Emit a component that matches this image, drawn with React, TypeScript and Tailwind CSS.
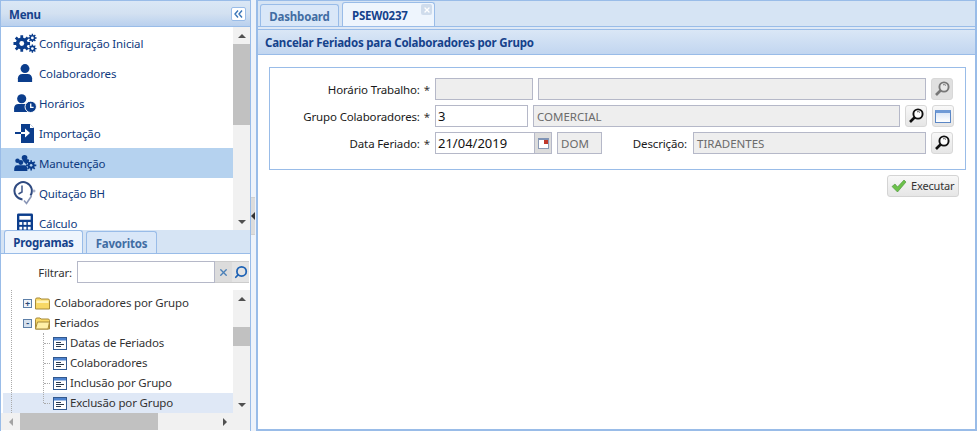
import { Search, X } from 'lucide-react'
import type { ReactNode } from 'react'

const NAVY = '#0b3d8c'

function GearsIcon() {
  return (
    <svg width="24" height="21" viewBox="0 0 26 22" fill="none">
      <g fill={NAVY}>
        <circle cx="9.500" cy="11" r="6.500" />
        <circle cx="21" cy="5" r="3.200" />
        <circle cx="21" cy="16.500" r="3.200" />
      </g>
      <g stroke={NAVY} strokeWidth="3">
        <path d="M9.500 2v18M.5 11h18M3 4.500l13 13M16 4.500l-13 13" />
      </g>
      <g stroke={NAVY} strokeWidth="1.500">
        <path d="M21 .5v9M16.500 5h9M17.800 1.800l6.400 6.400M24.200 1.800l-6.400 6.400M21 12v9M16.500 16.500h9M17.800 13.300l6.400 6.400M24.200 13.300l-6.400 6.400" />
      </g>
      <circle cx="9.500" cy="11" r="2.600" fill="#fff" />
      <circle cx="21" cy="5" r="1.500" fill="#fff" />
      <circle cx="21" cy="16.500" r="1.500" fill="#fff" />
    </svg>
  )
}

function UserIcon() {
  return (
    <svg width="16" height="18" viewBox="0 0 18 20" fill={NAVY}>
      <circle cx="9" cy="5" r="5" />
      <path d="M1 20v-4c0-3 2-5 5-5h6c3 0 5 2 5 5v4z" />
    </svg>
  )
}

function UserClockIcon() {
  return (
    <svg width="23" height="19" viewBox="0 0 24 20">
      <circle cx="8" cy="5" r="4.800" fill={NAVY} />
      <path d="M0 19v-4c0-3 2-4.500 4.500-4.500h7c2 0 3 .5 4 2V19z" fill={NAVY} />
      <circle cx="17.500" cy="13.500" r="6" fill={NAVY} stroke="#fff" strokeWidth="1" />
      <path d="M17.500 10v4h3" stroke="#fff" strokeWidth="1.400" fill="none" />
    </svg>
  )
}

function ImportIcon() {
  return (
    <svg width="20" height="19" viewBox="0 0 20 19">
      <path d="M6 0h9l4 4v15H6z" fill={NAVY} />
      <path d="M15 0l4 4h-4z" fill="#fff" />
      <path d="M0 9h10" stroke={NAVY} strokeWidth="2" />
      <path d="M6 9h5" stroke="#fff" strokeWidth="2" />
      <path d="M10 4.500L15 9l-5 4.500z" fill="#fff" />
    </svg>
  )
}

function TeamGearIcon() {
  return (
    <svg width="23" height="16" viewBox="0 0 24 17" fill={NAVY}>
      <circle cx="3.500" cy="6" r="2.400" />
      <circle cx="11" cy="3" r="3" />
      <circle cx="7" cy="8" r="2.600" />
      <path d="M0 17v-2c0-2 1-4 3-4h8c2 0 3 2 3 4v2zM9 6c0-1 1-1.500 2-1.500h3c1 0 2 .5 2 1.500l-3 4z" />
      <circle cx="18" cy="11" r="3.700" />
      <path d="M18 5.500v11M12.500 11h11M14.200 7.200l7.600 7.600M21.800 7.200l-7.600 7.600" stroke={NAVY} strokeWidth="1.700" />
      <circle cx="18" cy="11" r="1.400" fill="#b5d2ef" />
    </svg>
  )
}

function ClockCheckIcon() {
  return (
    <svg width="24" height="25" viewBox="0 0 24 25" fill="none">
      <path d="M17.500 14.500A8.700 8.700 0 1 0 9.500 18.500" stroke="#2f4a80" strokeWidth="2" />
      <path d="M9 4.500v6.500l-3.500 2" stroke="#3e5688" strokeWidth="1.500" />
      <path d="M11 19.500l2.500 3 5-7.500" stroke="#8a96b6" strokeWidth="1.600" />
      <path d="M21 8.500v3M19.500 10h3" stroke="#8a96b6" strokeWidth="1" />
    </svg>
  )
}

function CalcIcon() {
  return (
    <svg width="16" height="20" viewBox="0 0 17 20">
      <rect x="0" y="0" width="17" height="20" rx="1.500" fill={NAVY} />
      <rect x="2.500" y="2.500" width="12" height="4" fill="#fff" />
      <g fill="#fff">
        <rect x="2.500" y="9" width="3" height="3" />
        <rect x="7" y="9" width="3" height="3" />
        <rect x="11.500" y="9" width="3" height="3" />
        <rect x="2.500" y="14" width="3" height="3" />
        <rect x="7" y="14" width="3" height="3" />
        <rect x="11.500" y="14" width="3" height="3" />
      </g>
    </svg>
  )
}

function Folder({ open }: { open?: boolean }) {
  return (
    <svg width="15" height="13" viewBox="0 0 15 13">
      <path d="M.5 2.500Q.5 1 2 1h3l1 1h7q1.500 0 1.500 1.500V12H.5z" fill="#f8d866" stroke="#a88b3a" />
      {open && <path d="M.5 12L2.500 5h12L13 12z" fill="#fff0a8" stroke="#a88b3a" />}
      {!open && <path d="M1.500 3.500h12V6h-12z" fill="#fff3bc" />}
    </svg>
  )
}

function DocIcon() {
  return (
    <svg width="14" height="13" viewBox="0 0 14 13">
      <rect x=".5" y=".5" width="13" height="12" fill="#fff" stroke="#32598f" />
      <rect x="1" y="1" width="12" height="2.500" fill="#4e83cf" />
      <path d="M3 5.500h5M3 7.500h8M3 9.500h5" stroke="#2c3b50" strokeWidth="1" />
    </svg>
  )
}

function MagnifierIcon({ dim }: { dim?: boolean }) {
  const c = dim ? '#777' : '#111'
  return (
    <svg width="16" height="16" viewBox="0 0 16 16" fill="none">
      <circle cx="10" cy="6" r="4.600" stroke={c} strokeWidth="1.900" fill={dim ? '#e8e8e8' : '#fff'} />
      <path d="M6.500 9.500L2 14" stroke={c} strokeWidth="2.600" />
      <path d="M9 3.800a3 3 0 0 1 3 .6" stroke={dim ? '#777' : '#555'} strokeWidth="1" />
    </svg>
  )
}

function FieldButton({ children, dim }: { children: ReactNode; dim?: boolean }) {
  return (
    <div
      className={`w-[22px] h-[22px] shrink-0 flex items-center justify-center rounded-[3px] border border-[#d8d8d8] ${
        dim ? 'bg-[#e0e0e0]' : 'bg-gradient-to-b from-[#f8f8f8] to-[#e6e6e6]'
      }`}
    >
      {children}
    </div>
  )
}

function Field({ w, value, editable }: { w: string; value?: string; editable?: boolean }) {
  return (
    <div
      className={`${w} h-[22px] shrink-0 border border-[#b5b8c8] pt-[1px] flex items-center leading-none ${
        editable
          ? 'px-[2px] bg-white text-[#111] text-[13px] tracking-normal'
          : 'px-[3px] bg-[#eeeeee] text-[#6b6b6b] tracking-normal'
      }`}
    >
      {value}
    </div>
  )
}

function FormLabel({ children }: { children: ReactNode }) {
  return (
    <div className="w-[165px] shrink-0 flex justify-end pr-[5px] pt-[2px] text-[#1a1a1a]">
      <span>{children}</span>
      <span className="ml-[4px] text-[#333]">*</span>
    </div>
  )
}

function ScrollV({ thumbTop, thumbH }: { thumbTop: string; thumbH: string }) {
  return (
    <div className="w-[17px] shrink-0 bg-[#f1f1f1] flex flex-col items-center">
      <div className="h-[17px] shrink-0 flex items-center justify-center">
        <div className="w-0 h-0 border-x-[4px] border-x-transparent border-b-[4px] border-b-[#505050]" />
      </div>
      <div className={`${thumbTop} ${thumbH} w-full bg-[#c1c1c1] shrink-0`} />
      <div className="flex-1" />
      <div className="h-[17px] shrink-0 flex items-center justify-center">
        <div className="w-0 h-0 border-x-[4px] border-x-transparent border-t-[4px] border-t-[#505050]" />
      </div>
    </div>
  )
}

const menuItems = [
  { label: 'Configuração Inicial', icon: <GearsIcon /> },
  { label: 'Colaboradores', icon: <UserIcon /> },
  { label: 'Horários', icon: <UserClockIcon /> },
  { label: 'Importação', icon: <ImportIcon /> },
  { label: 'Manutenção', icon: <TeamGearIcon />, active: true },
  { label: 'Quitação BH', icon: <ClockCheckIcon /> },
  { label: 'Cálculo', icon: <CalcIcon /> },
]

export default function App() {
  return (
    <div className="w-[977px] h-[431px] overflow-hidden flex bg-[#eef3fa] text-[11.5px] tracking-[-0.15px] font-['Noto_Sans','DejaVu_Sans',sans-serif]">
      {/* menu lateral */}
      <div className="w-[251px] h-full shrink-0 flex flex-col border border-[#99bce8] border-b-0">
        <div className="h-[26px] shrink-0 flex items-center justify-between pl-[8px] pr-[4px] border-b border-[#99bce8] bg-gradient-to-b from-[#dae7f6] via-[#d3e1f1] to-[#b9d0ee]">
          <span className="font-bold text-[#15428b] pt-[2px] tracking-[-0.2px]">Menu</span>
          <div className="w-[15px] h-[14px] rounded-[2px] border border-[#99bce8] bg-white flex items-center justify-center">
            <svg width="9" height="8" viewBox="0 0 9 8" fill="none" stroke="#3a76b8" strokeWidth="1.400">
              <path d="M4 .5L1 4l3 3.500M8 .5L5 4l3 3.500" />
            </svg>
          </div>
        </div>
        <div className="h-[203px] shrink-0 flex bg-white overflow-hidden">
          <div className="flex-1 pt-[1px] overflow-hidden">
            {menuItems.map((item) => (
              <div
                key={item.label}
                className={`h-[30px] shrink-0 flex items-center text-[#0f3a7e] ${item.active ? 'bg-[#b5d2ef]' : ''}`}
              >
                <div className="w-[38px] shrink-0 flex justify-center pl-[10px]">{item.icon}</div>
                <span className="whitespace-nowrap pt-[2px]">{item.label}</span>
              </div>
            ))}
          </div>
          <ScrollV thumbTop="mt-0" thumbH="h-[81px]" />
        </div>
        <div className="h-[24px] shrink-0 flex items-end gap-[3px] pl-[3px] bg-[#d6e4f4] border-b border-[#99bce8]">
          <div className="h-[23px] w-[79px] pt-[2px] flex items-center justify-center font-bold tracking-[-0.2px] text-[#15428b] rounded-t-[3px] border border-[#99bce8] border-b-0 bg-[#eef5fd]">
            Programas
          </div>
          <div className="h-[22px] w-[71px] pt-[2px] flex items-center justify-center font-bold tracking-[-0.2px] text-[#416da3] rounded-t-[3px] border border-[#99bce8] border-b-0 bg-[#d9e7f8]">
            Favoritos
          </div>
        </div>
        <div className="flex-1 flex flex-col bg-white min-h-0">
          <div className="h-[36px] shrink-0 flex items-start pt-[7px]">
            <span className="w-[76px] shrink-0 text-right pr-[5px] leading-[24px] text-[#333]">Filtrar:</span>
            <div className="w-[138px] h-[22px] border border-[#b5b8c8] bg-white" />
            <div className="w-[17px] h-[22px] bg-[#dcdcdc] flex items-center justify-center border-y border-[#ccc]">
              <X size={11} strokeWidth={3} color="#4a80b8" />
            </div>
            <div className="w-[17px] h-[22px] bg-[#e4e4e4] flex items-center justify-center border-y border-[#ccc]">
              <Search size={14} strokeWidth={3} color="#1d62b5" className="-scale-x-100" />
            </div>
          </div>
          <div className="h-[123px] shrink-0 flex">
            <div className="flex-1 relative overflow-hidden text-[#333] pt-[3px]">
              <div className="absolute left-[10px] top-0 bottom-0 border-l border-dotted border-[#aaa]" />
              <div className="absolute left-[42px] top-[43px] h-[70px] border-l border-dotted border-[#aaa]" />
              <div className="h-[20px] flex items-center pl-[22px] gap-[3px]">
                <span className="w-[9px] h-[9px] border border-[#5d7fa8] bg-[#eef3f9] text-[9px] leading-[7px] text-center font-bold text-[#2a4a78]">+</span>
                <Folder />
                <span className="ml-[1px]">Colaboradores por Grupo</span>
              </div>
              <div className="h-[20px] flex items-center pl-[22px] gap-[3px]">
                <span className="w-[9px] h-[9px] border border-[#5d7fa8] bg-[#d5e1ee] text-[9px] leading-[5px] text-center font-bold text-[#2a4a78]">-</span>
                <Folder open />
                <span className="ml-[1px]">Feriados</span>
              </div>
              {['Datas de Feriados', 'Colaboradores', 'Inclusão por Grupo', 'Exclusão por Grupo'].map((t, i) => (
                <div
                  key={t}
                  className={`h-[20px] flex items-center pl-[41px] gap-[3px] ml-[2px] ${i === 3 ? 'bg-[#dfe8f6]' : ''}`}
                >
                  <span className="w-[6px] border-t border-dotted border-[#aaa]" />
                  <DocIcon />
                  <span>{t}</span>
                </div>
              ))}
            </div>
            <ScrollV thumbTop="mt-[20px]" thumbH="h-[19px]" />
          </div>
          <div className="h-[17px] shrink-0 bg-[#f1f1f1] flex items-center">
            <div className="w-[19px] flex justify-center">
              <div className="w-0 h-0 border-y-[4px] border-y-transparent border-r-[4px] border-r-[#a3a3a3]" />
            </div>
            <div className="w-[138px] h-full bg-[#c1c1c1]" />
            <div className="flex-1" />
            <div className="w-[17px] flex justify-center mr-[17px]">
              <div className="w-0 h-0 border-y-[4px] border-y-transparent border-l-[4px] border-l-[#505050]" />
            </div>
          </div>
        </div>
      </div>

      {/* divisor */}
      <div className="w-[5px] shrink-0 flex items-center">
        <div className="h-[38px] w-[4px] bg-[#dcdcdc] flex items-center border-y border-[#d0d0d0]">
          <div className="w-0 h-0 border-y-[4px] border-y-transparent border-r-[4px] border-r-[#333]" />
        </div>
      </div>

      {/* area principal */}
      <div className="flex-1 flex flex-col border-2 border-[#99bce8] border-t-0 border-b-0 min-w-0">
        <div className="h-[27px] shrink-0 flex items-end gap-[3px] pl-[2px] bg-[#d6e4f4] border-y border-[#99bce8]">
          <div className="h-[22px] w-[79px] pt-[2px] flex items-center justify-center font-bold tracking-[-0.2px] text-[#416da3] rounded-t-[3px] border border-[#99bce8] border-b-0 bg-[#d9e7f8]">
            Dashboard
          </div>
          <div className="h-[24px] w-[93px] relative pt-[2px] flex items-center pl-[9px] font-bold tracking-[-0.2px] text-[#15428b] rounded-t-[3px] border border-[#99bce8] border-b-0 bg-[#eef5fd]">
            PSEW0237
            <span className="absolute right-[2px] top-[1px] w-[11px] h-[11px] rounded-[2px] bg-[#cfdcec] flex items-center justify-center">
              <X size={8} strokeWidth={4} color="#fff" />
            </span>
          </div>
        </div>
        <div className="h-[3px] shrink-0 bg-[#dfe9f6] border-b border-[#99bce8]" />
        <div className="h-[25px] shrink-0 flex items-center pl-[7px] pt-[2px] font-bold tracking-[-0.2px] text-[#15428b] border-b border-[#99bce8] bg-gradient-to-b from-[#dae7f6] to-[#c2d6f0]">
          Cancelar Feriados para Colaboradores por Grupo
        </div>
        <div className="flex-1 bg-white pt-[12px] pl-[11px] pr-[10px] border-b-2 border-[#99bce8]">
          <div className="h-[103px] w-[697px] border border-[#99bce8] pt-[10px] flex flex-col gap-[5px]">
            <div className="h-[22px] flex items-center">
              <FormLabel>Horário Trabalho:</FormLabel>
              <Field w="w-[98px]" />
              <div className="w-[5px]" />
              <Field w="w-[388px]" />
              <div className="w-[5px]" />
              <FieldButton dim><MagnifierIcon dim /></FieldButton>
            </div>
            <div className="h-[22px] flex items-center">
              <FormLabel>Grupo Colaboradores:</FormLabel>
              <Field w="w-[93px]" value="3" editable />
              <div className="w-[5px]" />
              <Field w="w-[367px]" value="COMERCIAL" />
              <div className="w-[5px]" />
              <FieldButton><MagnifierIcon /></FieldButton>
              <div className="w-[5px]" />
              <FieldButton>
                <span className="w-[16px] h-[13px] border border-[#5a86c5] bg-gradient-to-b from-[#dce8f8] to-white border-t-[3px] border-t-[#6f9ad6]" />
              </FieldButton>
            </div>
            <div className="h-[22px] flex items-center">
              <FormLabel>Data Feriado:</FormLabel>
              <Field w="w-[100px]" value="21/04/2019" editable />
              <div className="w-[17px] h-[22px] shrink-0 bg-[#dcdcdc] border-y border-r border-[#b5b8c8] flex items-center justify-center">
                <span className="w-[11px] h-[11px] bg-white border border-[#8a9ab5] border-t-[2px] border-t-[#7f93b5] flex justify-end">
                  <span className="w-[4px] h-[4px] bg-[#c0392b]" />
                </span>
              </div>
              <div className="w-[5px]" />
              <Field w="w-[45px]" value="DOM" />
              <span className="w-[91px] shrink-0 text-right pr-[6px] pt-[2px] text-[#1a1a1a]">Descrição:</span>
              <Field w="w-[233px]" value="TIRADENTES" />
              <div className="w-[5px]" />
              <FieldButton><MagnifierIcon /></FieldButton>
            </div>
          </div>
          <div className="w-[690px] flex justify-end mt-[5px]">
            <div className="w-[72px] h-[22px] rounded-[3px] border border-[#d4d4d4] bg-gradient-to-b from-[#f8f8f8] to-[#e6e6e6] flex items-center gap-[4px] pl-[3px] text-[#333] text-[11px]">
              <svg width="16" height="14" viewBox="0 0 16 14">
                <path d="M1 7.500L4 5l2.500 3L13 1l2 2-8.500 10z" fill="#6cc24a" stroke="#4a8f3a" strokeWidth=".6" />
              </svg>
              <span className="pt-[1px]">Executar</span>
            </div>
          </div>
        </div>
      </div>
    </div>
  )
}
